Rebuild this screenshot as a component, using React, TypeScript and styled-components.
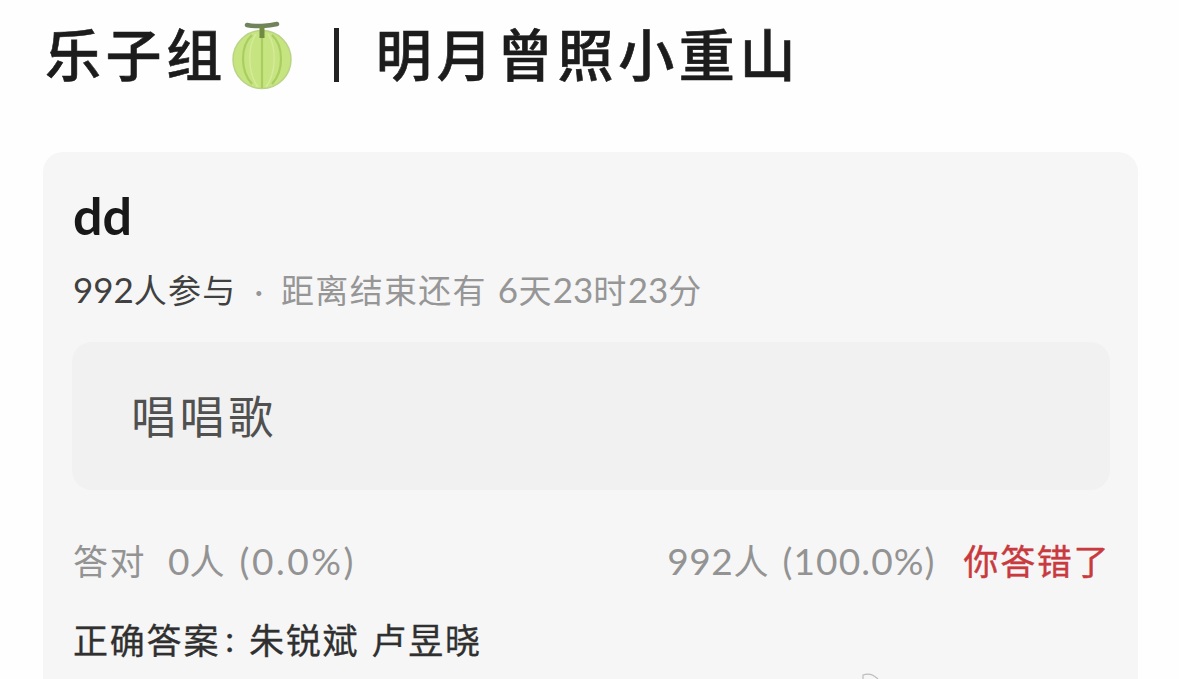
import React from 'react';
import styled, { createGlobalStyle } from 'styled-components';

const GlobalStyle = createGlobalStyle`
  * {
    box-sizing: border-box;
  }

  body {
    margin: 0;
    background-color: #fefefe;
    font-family: Lato, 'Noto Sans CJK SC', sans-serif;
    overflow: hidden;
  }
`;

const Page = styled.main`
  position: relative;
  display: flex;
  flex-direction: column;
  width: 1179px;
  height: 679px;
  padding: 0 41px 0 43px;
  overflow: hidden;
`;

const Title = styled.h1`
  display: flex;
  align-items: center;
  height: 112px;
  margin: 0 0 40px;
  padding-left: 2px;
  font-size: 56px;
  font-weight: 500;
  letter-spacing: 4.6px;
  white-space: nowrap;
  color: #1c1c1c;
  -webkit-text-stroke: 0.6px #1c1c1c;
`;

const TitleText = styled.span`
  padding-bottom: 9px;
`;

const MelonIcon = styled.svg`
  flex: none;
  width: 62px;
  height: 70px;
  margin-left: 4px;
`;

const Divider = styled.span`
  flex: none;
  width: 5px;
  height: 54px;
  margin: 0 37px 3px 41px;
  background-color: #222;
`;

const Card = styled.section`
  flex: 1;
  display: flex;
  flex-direction: column;
  padding: 33px 28px 0 29px;
  border-radius: 20px 20px 0 0;
  background-color: #f6f6f6;
`;

const Question = styled.h2`
  margin: 0;
  height: 60px;
  padding-left: 1px;
  line-height: 60px;
  font-size: 52px;
  font-weight: 700;
  color: #181818;
`;

const Meta = styled.div`
  display: flex;
  align-items: baseline;
  height: 48px;
  margin-top: 21px;
  padding-left: 1px;
  line-height: 48px;
  font-size: 33px;
  white-space: nowrap;
`;

const Run = styled.span<{ $color?: string; $spacing?: number; $left?: number }>`
  color: ${(props) => props.$color || 'inherit'};
  letter-spacing: ${(props) => props.$spacing || 0}px;
  margin-left: ${(props) => props.$left || 0}px;
`;

// Figures run slightly larger than the characters around them
const Num = styled.span<{ $left?: number; $spacing?: number }>`
  font-size: 1.06em;
  line-height: 1;
  letter-spacing: ${(props) => props.$spacing || 0}px;
  margin-left: ${(props) => props.$left || 0}px;
`;

const Option = styled.div`
  display: flex;
  align-items: center;
  height: 148px;
  margin-top: 28px;
  padding: 0 0 3px 59px;
  border-radius: 20px;
  background-color: #f1f1f1;
  font-size: 45px;
  letter-spacing: 3.6px;
  color: #505050;
`;

const Results = styled.div`
  display: flex;
  align-items: center;
  justify-content: space-between;
  height: 50px;
  margin-top: 44px;
  padding-left: 1px;
  font-size: 35px;
  white-space: nowrap;
  color: #939393;
`;

const Wrong = styled.span`
  margin-left: 28px;
  letter-spacing: 1.6px;
  color: #c93a3e;
  -webkit-text-stroke: 0.4px #c93a3e;
`;

const Answer = styled.div`
  display: flex;
  align-items: center;
  height: 50px;
  margin-top: 29px;
  padding-left: 1px;
  font-size: 35px;
  letter-spacing: 1.8px;
  white-space: nowrap;
  color: #303030;
  -webkit-text-stroke: 0.3px #303030;
`;

// Sits on the bottom edge, over the card
const Watermark = styled.svg`
  position: absolute;
  left: 860px;
  bottom: 0;
  width: 20px;
  height: 6px;
`;

const Melon: React.FC = () => (
  <MelonIcon viewBox="0 0 62 70" fill="none">
    <circle cx="31" cy="38.5" r="29" fill="#c6e480" stroke="#b9d484" strokeWidth="1.5" />
    <g stroke="#a9cd62" strokeWidth="2.2">
      <path d="M21 14C9 25 9 50 21 63" />
      <path d="M31 12V67" />
      <path d="M41 14C53 25 53 50 41 63" />
      <path d="M25 13C16 26 17 53 27 66" strokeWidth="1.4" stroke="#d5eb9b" />
      <path d="M37 13C46 26 45 53 35 66" strokeWidth="1.4" stroke="#d5eb9b" />
    </g>
    <path d="M16 4C24 6 38 5 46 3" stroke="#70835a" strokeWidth="4.5" strokeLinecap="round" />
    <path d="M31 5V17" stroke="#718b43" strokeWidth="5" />
  </MelonIcon>
);

const App: React.FC = () => {
  return (
    <>
      <GlobalStyle />
      <Page>
        <Title>
          <TitleText>乐子组</TitleText>
          <Melon />
          <Divider />
          <TitleText>明月曾照小重山</TitleText>
        </Title>
        <Card>
          <Question>dd</Question>
          <Meta>
            <Run $color="#404040" $spacing={1.2}>
              <Num>992</Num>人参与
            </Run>
            <Run $color="#969696" $left={18}>·</Run>
            <Run $color="#969696" $left={18} $spacing={1.3}>
              距离结束还有 <Num $left={1} $spacing={0.5}>6</Num>天<Num>23</Num>时<Num>23</Num>分
            </Run>
          </Meta>
          <Option>唱唱歌</Option>
          <Results>
            <div>
              <Run $spacing={1.5}>答对</Run>
              <Run $left={22}><Num>0</Num>人</Run>
              <Num $left={15} $spacing={2.5}>(0.0%)</Num>
            </div>
            <div>
              <Run><Num $spacing={0.6}>992</Num>人</Run>
              <Num $left={14} $spacing={1.1}>(100.0%)</Num>
              <Wrong>你答错了</Wrong>
            </div>
          </Results>
          <Answer>
            正确答案
            <Run $left={5}>:</Run>
            <Run $left={15} $spacing={1.8}>朱锐斌</Run>
            <Run $left={12} $spacing={1.8}>卢昱晓</Run>
          </Answer>
        </Card>
        <Watermark viewBox="0 0 20 6" fill="none">
          <path d="M3 6V2C8 0 13 1 18 6" stroke="#bdbdbd" strokeWidth="1.2" />
        </Watermark>
      </Page>
    </>
  );
};

export default App;
